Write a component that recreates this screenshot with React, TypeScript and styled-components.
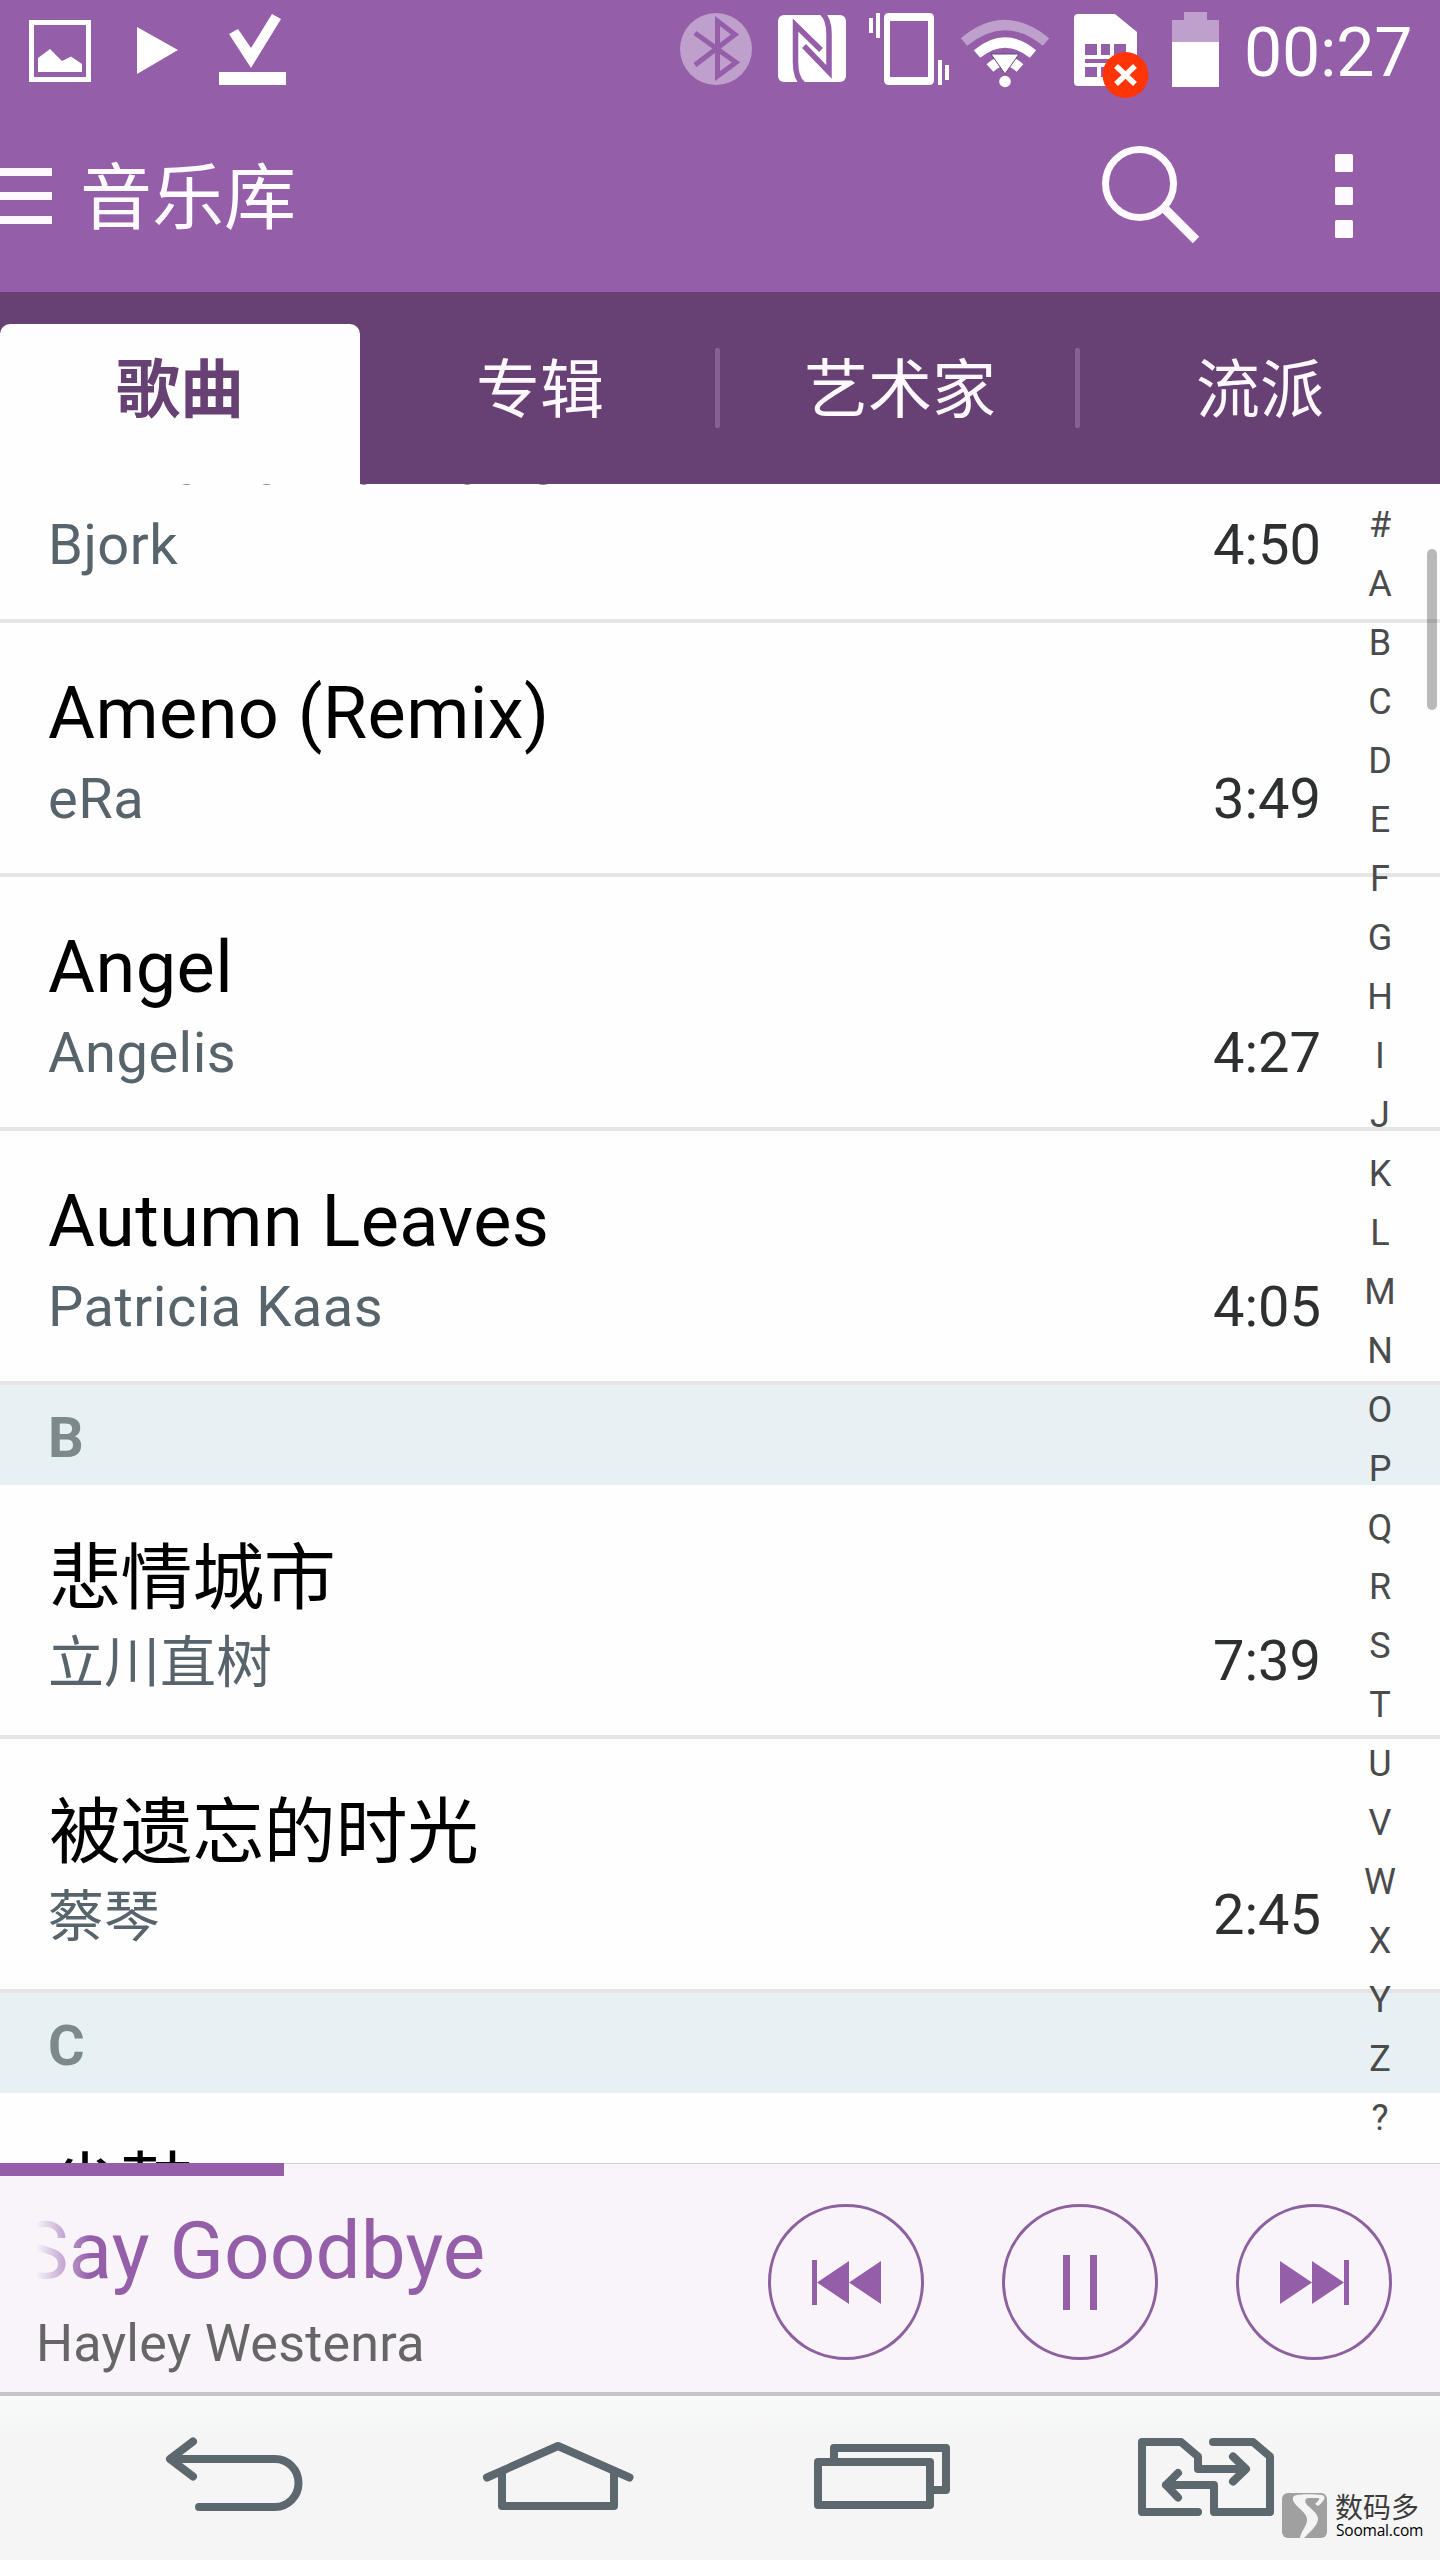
import React from "react";
import styled, { createGlobalStyle, css } from "styled-components";

const latin = `Roboto, "Noto Sans CJK SC", sans-serif`;

const Global = createGlobalStyle`
  html, body { margin: 0; padding: 0; background: #fefefe; }
  * { box-sizing: border-box; }
`;

const Screen = styled.div`
  width: 1440px;
  height: 2560px;
  overflow: hidden;
  display: flex;
  flex-direction: column;
  font-family: ${latin};
  background: #fefefe;
`;

const StatusBar = styled.div`
  height: 100px;
  flex: none;
  display: flex;
  justify-content: space-between;
  background: #945ea9;
`;

const StatusIcons = styled.svg`
  display: block;
  flex: none;
`;

const StatusRight = styled.div`
  display: flex;
`;

const Clock = styled.div`
  width: 196px;
  font-size: 68px;
  line-height: 80px;
  padding-top: 13px;
  color: #fff;
  letter-spacing: -0.2px;
  white-space: nowrap;
`;

const AppBar = styled.header`
  height: 192px;
  flex: none;
  display: flex;
  align-items: center;
  background: #945ea9;
`;

const MenuButton = styled.div`
  width: 80px;
  height: 56px;
  display: flex;
  flex-direction: column;
  justify-content: space-between;
`;

const MenuLine = styled.div`
  width: 52px;
  height: 8px;
  background: #fff8ff;
`;

const Title = styled.h1`
  margin: 0;
  flex: 1;
  padding-top: 6px;
  font-size: 72px;
  font-weight: 400;
  line-height: 104px;
  color: #fffaff;
`;

const Tabs = styled.nav`
  height: 192px;
  flex: none;
  display: flex;
  align-items: flex-end;
  background: #684174;
`;

const Tab = styled.div<{ $active?: boolean; $divided?: boolean }>`
  width: 360px;
  height: 160px;
  display: flex;
  align-items: center;
  font-size: 64px;
  line-height: 90px;
  padding: 0 0 32px 5px;
  color: #fff8ff;
  ${(p) =>
    p.$active &&
    css`
      background: #fefefe;
      color: #684174;
      font-weight: 700;
      border-radius: 10px 10px 0 0;
    `}
  &::after {
    content: "";
    width: 5px;
    height: 80px;
    border-radius: 2px;
    background: ${(p) => (p.$divided ? "#865f95" : "transparent")};
  }
`;

const TabLabel = styled.span`
  flex: 1;
  padding-top: 6px;
  text-align: center;
`;

const Library = styled.main`
  height: 1679px;
  flex: none;
  position: relative;
  overflow: hidden;
`;

const List = styled.div`
  margin-top: -115px;
`;

const Row = styled.div`
  height: 254px;
  padding: 0 119px 0 48px;
  border-bottom: 4px solid #e5e5e6;
  background: #fefefe;
`;

const SongTitle = styled.div<{ $cjk?: boolean }>`
  height: 146px;
  padding-top: ${(p) => (p.$cjk ? 42 : 39)}px;
  padding-left: ${(p) => (p.$cjk ? 1 : 0)}px;
  font-size: 72px;
  line-height: 104px;
  letter-spacing: ${(p) => (p.$cjk ? -0.4 : 0.45)}px;
  color: #000;
  white-space: nowrap;
`;

const RowMeta = styled.div`
  display: flex;
  justify-content: space-between;
  font-size: 56px;
  line-height: 60px;
  color: #58646c;
`;

const SongArtist = styled.span<{ $cjk?: boolean }>`
  letter-spacing: ${(p) => (p.$cjk ? 0 : 0.5)}px;
  padding-top: ${(p) => (p.$cjk ? 2 : 0)}px;
`;

const Duration = styled.span`
  color: #2d2f30;
`;

const Section = styled.div`
  height: 100px;
  padding-left: 48px;
  border-top: 3px solid #ecedf0;
  background: #e7f0f3;
  color: #7e898c;
  font-size: 56px;
  font-weight: 700;
  line-height: 100px;
`;

const IndexBar = styled.div`
  position: absolute;
  top: 12px;
  right: 30px;
  width: 60px;
  display: flex;
  flex-direction: column;
  align-items: center;
`;

const IndexLetter = styled.span`
  height: 59px;
  font-size: 36px;
  line-height: 59px;
  color: #4a4b4c;
`;

const Scrollbar = styled.div`
  position: absolute;
  top: 65px;
  right: 3px;
  width: 10px;
  height: 161px;
  border-radius: 5px;
  background: rgba(0, 0, 0, 0.27);
`;

const Player = styled.section`
  height: 229px;
  flex: none;
  display: flex;
  flex-direction: column;
  background: #f8f4fa;
`;

const Track = styled.div`
  height: 13px;
  border-top: 1px solid #d2cfd5;
`;

const Progress = styled.div`
  width: 284px;
  height: 13px;
  margin-top: -1px;
  background: #945ea9;
`;

const PlayerBody = styled.div`
  display: flex;
  justify-content: space-between;
  padding: 28px 48px 0 36px;
`;

const NowPlaying = styled.div`
  width: 600px;
`;

const Marquee = styled.div`
  height: 100px;
  overflow: hidden;
  mask-image: linear-gradient(to right, transparent 0, #000 54px);
`;

const MarqueeText = styled.div`
  margin-left: -15px;
  font-size: 80px;
  line-height: 94px;
  letter-spacing: 0.1px;
  color: #945ea9;
  white-space: nowrap;
`;

const Artist = styled.div`
  font-size: 52px;
  line-height: 60px;
  padding-top: 10px;
  letter-spacing: 0.25px;
  color: #666;
`;

const Controls = styled.div`
  display: flex;
  gap: 78px;
`;

const RoundButton = styled.div`
  width: 156px;
  height: 156px;
  border: 3px solid #8d609f;
  border-radius: 50%;
  display: flex;
  align-items: center;
  justify-content: center;
`;

const NavBar = styled.footer`
  height: 168px;
  flex: none;
  border-top: 4px solid #c5c6ca;
  background: linear-gradient(#f8f9f9 0, #f5f5f5 45px);
  display: flex;
`;

const NavIcons = styled.svg`
  flex: none;
`;

const Watermark = styled.div`
  display: flex;
  align-items: flex-start;
  padding-top: 97px;
  gap: 8px;
`;

const WatermarkText = styled.div`
  display: flex;
  flex-direction: column;
  color: #3c3c3c;
  font-size: 28px;
  line-height: 31px;
`;

const Site = styled.span`
  font-family: "Open Sans", sans-serif;
  font-size: 15.5px;
  font-weight: 400;
  line-height: 12px;
  letter-spacing: -0.2px;
  padding-left: 1px;
  color: #000;
`;

type Song = { title: string; artist: string; time: string; cjk?: boolean };

const Entry = ({ title, artist, time, cjk }: Song) => (
  <Row>
    <SongTitle $cjk={cjk}>{title}</SongTitle>
    <RowMeta>
      <SongArtist $cjk={cjk}>{artist}</SongArtist>
      <Duration>{time}</Duration>
    </RowMeta>
  </Row>
);

const songsA: Song[] = [
  { title: "All is full of love", artist: "Bjork", time: "4:50" },
  { title: "Ameno (Remix)", artist: "eRa", time: "3:49" },
  { title: "Angel", artist: "Angelis", time: "4:27" },
  { title: "Autumn Leaves", artist: "Patricia Kaas", time: "4:05" },
];

const songsB: Song[] = [
  { title: "悲情城市", artist: "立川直树", time: "7:39", cjk: true },
  { title: "被遗忘的时光", artist: "蔡琴", time: "2:45", cjk: true },
];

const letters = "#ABCDEFGHIJKLMNOPQRSTUVWXYZ?".split("");

export default function App() {
  return (
    <>
      <Global />
      <Screen>
        <StatusBar>
          <StatusIcons width="300" height="100" viewBox="0 0 300 100" fill="#fff">
            <path d="M29 20H91V82H29ZM34 25V77H86V25Z" fillRule="evenodd" />
            <path d="M38 58L50 49L62 61L71 56.500L82 64V72H38Z" />
            <path d="M137 27L178 50L137 74Z" />
            <path d="M229 34L238 29L251 48L272 14L281 19L251 68Z" />
            <path d="M219 72H286V85H219Z" />
          </StatusIcons>
          <StatusRight>
            <StatusIcons width="564" height="100" viewBox="680 0 564 100" fill="#fff">
              <circle cx="716" cy="49" r="36" fill="#bf9fcc" />
              <path d="M695 33L736 62.500L717.500 76V21L735 34.500L695 65" fill="none" stroke="#945ea9" strokeWidth="5" />
              <rect x="778" y="15" width="68" height="67" rx="6" />
              <path d="M821 50L795.500 25V62Q795.500 78 803 84M804 46L829 72V34Q829 19 822 13" fill="none" stroke="#945ea9" strokeWidth="5.500" />
              <path d="M889 13H929Q934 13 934 18V80Q934 85 929 85H889Q884 85 884 80V18Q884 13 889 13ZM890 21V77H928V21Z" fillRule="evenodd" />
              <path d="M869 18H873V33H869ZM876 13H880V38H876ZM938 60H942V85H938ZM945 65H949V80H945Z" />
              <path d="M964 42Q1005 8 1046 42" fill="none" stroke="#bf9fcc" strokeWidth="10" />
              <path d="M977 54Q1005 31 1033 54" fill="none" stroke="#fff" strokeWidth="10" />
              <path d="M990 68Q1005 54 1020 68" fill="none" stroke="#fff" strokeWidth="10" />
              <path d="M991 54H1019L1005 74Z" stroke="#68466f" strokeWidth="1" />
              <circle cx="1005" cy="81.500" r="5.800" />
              <path d="M1078 14H1115L1137 32V86H1078Q1074 86 1074 82V18Q1074 14 1078 14Z" />
              <path d="M1085 44H1097V55H1085ZM1101 44H1110V55H1101ZM1114 44H1126V55H1114ZM1085 59H1126V63H1085ZM1085 67H1097V77H1085ZM1101 67H1110V77H1101Z" fill="#945ea9" />
              <circle cx="1125.500" cy="75" r="23" fill="#ff3507" />
              <path d="M1116 66L1135 84M1135 66L1116 84" stroke="#fff" strokeWidth="5.500" />
              <path d="M1172 20H1184V12H1207V20H1219V42H1172Z" fill="#bf9fcc" />
              <path d="M1172 42H1219V87H1172Z" />
            </StatusIcons>
            <Clock>00:27</Clock>
          </StatusRight>
        </StatusBar>

        <AppBar>
          <MenuButton>
            <MenuLine />
            <MenuLine />
            <MenuLine />
          </MenuButton>
          <Title>音乐库</Title>
          <StatusIcons width="360" height="192" viewBox="1080 100 360 192" fill="#fffaff">
            <circle cx="1139.500" cy="183.500" r="34" fill="none" stroke="#fffaff" strokeWidth="7" />
            <path d="M1163 207L1196 240" stroke="#fffaff" strokeWidth="9" />
            <rect x="1335" y="154" width="18" height="18" rx="1.500" />
            <rect x="1335" y="187" width="18" height="18" rx="1.500" />
            <rect x="1335" y="220" width="18" height="18" rx="1.500" />
          </StatusIcons>
        </AppBar>

        <Tabs>
          <Tab $active><TabLabel>歌曲</TabLabel></Tab>
          <Tab $divided><TabLabel>专辑</TabLabel></Tab>
          <Tab $divided><TabLabel>艺术家</TabLabel></Tab>
          <Tab><TabLabel>流派</TabLabel></Tab>
        </Tabs>

        <Library>
          <List>
            {songsA.map((s) => <Entry key={s.title} {...s} />)}
            <Section>B</Section>
            {songsB.map((s) => <Entry key={s.title} {...s} />)}
            <Section>C</Section>
            <Row><SongTitle $cjk>尘鼓</SongTitle></Row>
          </List>
          <IndexBar>
            {letters.map((l) => <IndexLetter key={l}>{l}</IndexLetter>)}
          </IndexBar>
          <Scrollbar />
        </Library>

        <Player>
          <Track><Progress /></Track>
          <PlayerBody>
            <NowPlaying>
              <Marquee><MarqueeText>Say Goodbye</MarqueeText></Marquee>
              <Artist>Hayley Westenra</Artist>
            </NowPlaying>
            <Controls>
              <RoundButton>
                <svg width="70" height="56" viewBox="0 0 70 56" fill="#945ea9">
                  <path d="M1 6H6V51H1ZM6 28.500L38 7V50ZM38 28.500L70 7V50Z" />
                </svg>
              </RoundButton>
              <RoundButton>
                <svg width="34" height="56" viewBox="0 0 34 56" fill="#945ea9">
                  <path d="M0 1H7V56H0ZM27 1H34V56H27Z" />
                </svg>
              </RoundButton>
              <RoundButton>
                <svg width="70" height="56" viewBox="0 0 70 56" fill="#945ea9">
                  <path d="M65 6H70V51H65ZM65 28.500L33 7V50ZM33 28.500L1 7V50Z" />
                </svg>
              </RoundButton>
            </Controls>
          </PlayerBody>
        </Player>

        <NavBar>
          <NavIcons width="1282" height="164" viewBox="0 2396 1282 164" fill="none" stroke="#5c676e" strokeWidth="8" strokeLinecap="round" strokeLinejoin="round">
            <path d="M193 2441.500L170 2459L193 2476.500M172 2459H275A23.500 24 0 0 1 275 2507H199" />
            <path d="M487 2477.500L558 2446L629.500 2477.500M502 2473V2506H614V2473" />
            <path d="M818 2462H930V2505H818ZM834 2460V2448H946V2490H932" />
            <path d="M1198 2512H1142V2442H1181L1198 2456.500V2469H1244M1233 2456.500L1246 2469L1233 2481.500M1213 2442H1253L1270 2456.500V2512H1214V2485H1166M1178 2473L1166 2485L1178 2497.500" />
          </NavIcons>
          <Watermark>
            <svg width="45" height="45" viewBox="0 0 45 45">
              <rect width="45" height="45" rx="6" fill="#a0a0a0" />
              <path d="M40 2C31 1 16 1 12 3C9 6 12 10 15 13C20 18 26 22 25 28C24 34 19 38 18 45H22C28 39 36 32 36 26C36 20 28 15 25 12C22 8 23 5 27 5H37C38 7 35 9 33 11L36 13C40 10 46 4 40 2Z" fill="#f4f4f4" />
            </svg>
            <WatermarkText>
              <span>数码多</span>
              <Site>Soomal.com</Site>
            </WatermarkText>
          </Watermark>
        </NavBar>
      </Screen>
    </>
  );
}
